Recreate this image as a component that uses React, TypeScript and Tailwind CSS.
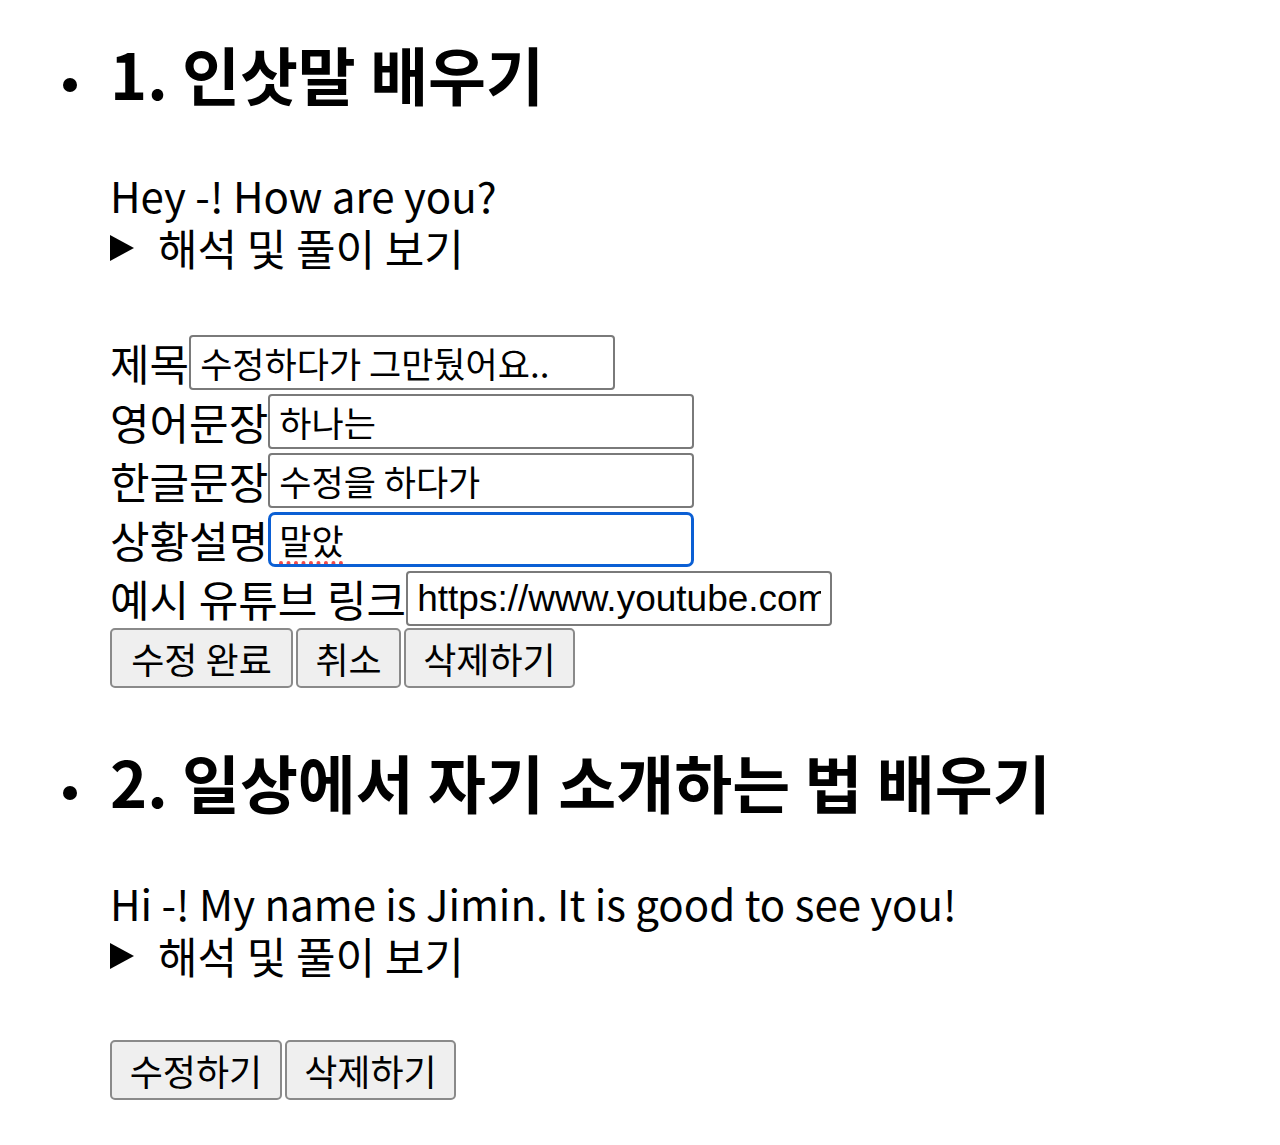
import React from "react";

const lessons = [
  { id: 1, title: "1. 인삿말 배우기", sentence: "Hey -! How are you?", editing: true },
  { id: 2, title: "2. 일상에서 자기 소개하는 법 배우기", sentence: "Hi -! My name is Jimin. It is good to see you!", editing: false },
];

const btn =
  "h-[60px] border-2 border-[#8a8a8a] rounded-[5px] bg-[#efefef] text-[36px] leading-none text-black flex items-center justify-center";

const field =
  "h-[55px] w-[426px] border-2 border-[#7a7a7a] rounded-[4px] bg-white px-[9px] outline-none text-black";

function Triangle() {
  return (
    <svg width="24" height="26" viewBox="0 0 24 26" className="mr-[24px] shrink-0">
      <polygon points="0,0 24,13 0,26" fill="#000" />
    </svg>
  );
}

function EditForm() {
  const rows = [
    { label: "제목", value: "수정하다가 그만뒀어요.." },
    { label: "영어문장", value: "하나는" },
    { label: "한글문장", value: "수정을 하다가" },
  ];

  return (
    <div className="mt-[59px]">
      {rows.map((r) => (
        <div key={r.label} className="flex items-center h-[59px]">
          <span className="text-[43px] leading-none">{r.label}</span>
          <input
            defaultValue={r.value}
            className={field + " text-[35px] font-['Noto_Sans_CJK_KR',sans-serif]"}
          />
        </div>
      ))}
      <div className="flex items-center h-[59px]">
        <span className="text-[43px] leading-none">상황설명</span>
        <input
          defaultValue="말았"
          className="h-[55px] w-[426px] border-[3px] border-[#0b5fd4] rounded-[7px] bg-white px-[8px] outline-none text-black text-[35px] font-['Noto_Sans_CJK_KR',sans-serif] underline decoration-dotted decoration-[#f04a4a] decoration-[4px] underline-offset-[6px]"
        />
      </div>
      <div className="flex items-center h-[59px]">
        <span className="text-[43px] leading-none">예시 유튜브 링크</span>
        <input
          defaultValue="https://www.youtube.com/watch?v=example"
          className={field + " text-[37px] font-['Liberation_Sans',Arial,sans-serif]"}
        />
      </div>
      <div className="flex gap-[3px]">
        <button className={btn + " w-[183px]"}>수정 완료</button>
        <button className={btn + " w-[105px]"}>취소</button>
        <button className={btn + " w-[171px]"}>삭제하기</button>
      </div>
    </div>
  );
}

export default function App() {
  return (
    <div className="min-h-screen bg-white text-black font-['Noto_Sans_CJK_KR',sans-serif] pl-[63px] pt-[33px]">
      {lessons.map((l, i) => (
        <div key={l.id} className={i > 0 ? "mt-[53px]" : ""}>
          {/* HEADING */}
          <div className="flex items-end h-[80px]">
            <span className="w-[14px] h-[14px] rounded-full bg-black mb-[21px] mr-[33px] shrink-0" />
            <h1 className="text-[63px] leading-[80px] font-bold">{l.title}</h1>
          </div>

          <div className="pl-[47px]">
            <p className="mt-[55px] text-[42px] leading-[53px]">{l.sentence}</p>
            <div className="flex items-center text-[43px] leading-[53px]">
              <Triangle />
              <span>해석 및 풀이 보기</span>
            </div>

            {l.editing ? (
              <EditForm />
            ) : (
              <div className="flex gap-[3px] mt-[58px]">
                <button className={btn + " w-[172px]"}>수정하기</button>
                <button className={btn + " w-[171px]"}>삭제하기</button>
              </div>
            )}
          </div>
        </div>
      ))}
    </div>
  );
}
